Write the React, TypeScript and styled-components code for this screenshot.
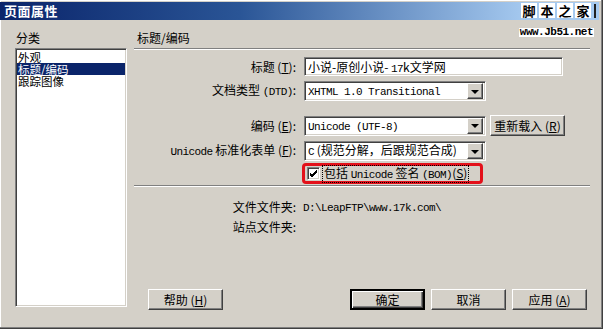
import React from 'react';
import styled, { createGlobalStyle } from 'styled-components';

const cjk = `"Noto Sans CJK SC", "Liberation Sans", sans-serif`;
const mono = `"Liberation Mono", "Noto Sans CJK SC", monospace`;

const GlobalStyle = createGlobalStyle`
  html, body { margin: 0; padding: 0; background: #d4d0c8; }
  body { font-family: ${cjk}; font-size: 12px; color: #000; }
`;

const Window = styled.div`
  position: relative;
  width: 603px;
  height: 329px;
  box-sizing: border-box;
  background: #d4d0c8;
  border-right: 1px solid #404040;
  border-bottom: 1px solid #404040;
  box-shadow: inset -1px -1px #808080, inset 1px 1px #ffffff;
  display: flex;
  flex-direction: column;
  overflow: hidden;
`;

const TitleBar = styled.div`
  margin: 2px 3px 0 0;
  height: 18px;
  background: linear-gradient(to right, #0a246a 0%, #2a5596 40%, #a6caf0 88%);
  display: flex;
  align-items: center;
  padding-left: 4px;
`;

const TitleText = styled.span`
  color: #fff;
  font-weight: bold;
  font-size: 13px;
  letter-spacing: 0.5px;
  line-height: 18px;
`;

const Watermark = styled.div`
  position: absolute;
  top: 3px;
  right: 6px;
  display: flex;
  flex-direction: column;
  align-items: flex-end;
  gap: 10px;
`;

const MarkChars = styled.div`
  display: flex;
  gap: 2px;
  align-items: center;
`;

const MarkChar = styled.span`
  background: #fff;
  color: #000;
  width: 16px;
  height: 15px;
  line-height: 15px;
  text-align: center;
  font-size: 13px;
  font-weight: bold;
`;

const MarkBar = styled.span`
  width: 2px;
  height: 14px;
  background: #202020;
  margin-left: 1px;
`;

const MarkUrl = styled.span`
  background: #fff;
  font-family: ${mono};
  font-size: 11px;
  letter-spacing: -0.5px;
  font-weight: bold;
  line-height: 9px;
  padding: 0 1px;
  margin-right: 2px;
`;

const Body = styled.div`
  flex: 1;
  display: flex;
  padding: 0 0 18px 15px;
`;

const LeftCol = styled.div`
  width: 112px;
  display: flex;
  flex-direction: column;
`;

const GroupLabel = styled.div<{ $indent?: number }>`
  margin-top: 11px;
  height: 14px;
  line-height: 14px;
  padding-left: ${p => p.$indent ?? 1}px;
`;

const sunken = `
  box-sizing: border-box;
  border: 1px solid;
  border-color: #808080 #ffffff #ffffff #808080;
  box-shadow: inset 1px 1px #404040, inset -1px -1px #d4d0c8;
  background: #fff;
`;

const raised = `
  box-sizing: border-box;
  border: 1px solid;
  border-color: #ffffff #404040 #404040 #ffffff;
  box-shadow: inset -1px -1px #808080, inset 1px 1px #d4d0c8;
  background: #d4d0c8;
`;

const ListBox = styled.div`
  ${sunken}
  margin-top: 3px;
  height: 259px;
  padding: 2px 1px;
`;

const ListItem = styled.div<{ $selected?: boolean }>`
  height: 12px;
  line-height: 12px;
  font-size: 11.5px;
  padding-left: 1px;
  white-space: nowrap;
  background: ${p => (p.$selected ? '#0a246a' : 'transparent')};
  color: ${p => (p.$selected ? '#fff' : '#000')};
`;

const RightCol = styled.div`
  width: 456px;
  margin-left: 7px;
  display: flex;
  flex-direction: column;
`;

const Etched = styled.div<{ $top: number }>`
  margin-top: ${p => p.$top}px;
  height: 0;
  border-top: 1px solid #808080;
  border-bottom: 1px solid #ffffff;
`;

const Row = styled.div<{ $top: number }>`
  margin-top: ${p => p.$top}px;
  display: flex;
  align-items: center;
`;

const Label = styled.span`
  width: 166px;
  padding-right: 4px;
  box-sizing: border-box;
  text-align: right;
  white-space: nowrap;
  line-height: 14px;
  margin-right: 4px;
`;

const Lat = styled.span`
  font-family: ${mono};
  font-size: 11px;
  letter-spacing: -0.6px;
`;

const TextInput = styled.div`
  ${sunken}
  width: 259px;
  height: 19px;
  padding-left: 3px;
  line-height: 17px;
  white-space: nowrap;
`;

const Select = styled.div`
  ${sunken}
  width: 182px;
  height: 20px;
  display: flex;
  align-items: center;
  padding: 2px 2px 2px 3px;
`;

const SelectText = styled.span`
  flex: 1;
  white-space: nowrap;
  overflow: hidden;
  line-height: 16px;
`;

const DropButton = styled.span`
  ${raised}
  width: 16px;
  height: 16px;
  display: flex;
  align-items: center;
  justify-content: center;
  &::after {
    content: '';
    border-left: 4px solid transparent;
    border-right: 4px solid transparent;
    border-top: 4px solid #000;
    margin-top: 1px;
  }
`;

const PushButton = styled.button<{ $default?: boolean; $width?: number }>`
  ${raised}
  width: ${p => p.$width ?? 75}px;
  height: 21px;
  padding: 0;
  font-family: ${cjk};
  font-size: 12px;
  color: #000;
  white-space: nowrap;
  ${p =>
    p.$default &&
    `
    border: 2px solid;
    border-color: #000;
    box-shadow: inset 1px 1px #fff, inset -1px -1px #404040, inset -2px -2px #808080;
  `}
`;

const HighlightBox = styled.div`
  margin-left: -2px;
  width: 181px;
  height: 21px;
  box-sizing: border-box;
  border: 3px solid #e3101a;
  border-radius: 4px;
  display: flex;
  align-items: center;
  padding-left: 2px;
`;

const CheckBox = styled.span`
  ${sunken}
  width: 13px;
  height: 13px;
  display: flex;
  align-items: center;
  justify-content: center;
`;

const CheckLabel = styled.span`
  margin-left: 3px;
  padding: 0 1px;
  outline: 1px dotted #000;
  line-height: 13px;
  white-space: nowrap;
`;

const Value = styled.span`
  line-height: 14px;
  white-space: nowrap;
  margin-left: -1px;
`;

const ButtonRow = styled.div`
  margin-top: auto;
  display: flex;
  padding: 0 3px 0 14px;
  gap: 6px;
`;

const Spacer = styled.div`
  flex: 1;
`;

const Key = ({ k }: { k: string }) => (
  <span>
    (<u>{k}</u>)
  </span>
);

export default function App() {
  return (
    <>
      <GlobalStyle />
      <Window>
        <TitleBar>
          <TitleText>页面属性</TitleText>
        </TitleBar>
        <Watermark>
          <MarkChars>
            <MarkChar>脚</MarkChar>
            <MarkChar>本</MarkChar>
            <MarkChar>之</MarkChar>
            <MarkChar>家</MarkChar>
            <MarkBar />
          </MarkChars>
          <MarkUrl>www.Jb51.net</MarkUrl>
        </Watermark>
        <Body>
          <LeftCol>
            <GroupLabel>分类</GroupLabel>
            <ListBox>
              <ListItem>外观</ListItem>
              <ListItem $selected>标题/编码</ListItem>
              <ListItem>跟踪图像</ListItem>
            </ListBox>
          </LeftCol>
          <RightCol>
            <GroupLabel $indent={3}>标题/编码</GroupLabel>
            <Etched $top={3} />

            <Row $top={7}>
              <Label>
                标题 <Key k="T" />:
              </Label>
              <TextInput>
                小说-原创小说- <Lat>17</Lat>k文学网
              </TextInput>
            </Row>

            <Row $top={5}>
              <Label>
                文档类型 <Lat>(DTD)</Lat>:
              </Label>
              <Select>
                <SelectText>
                  <Lat>XHTML 1.0 Transitional</Lat>
                </SelectText>
                <DropButton />
              </Select>
            </Row>

            <Row $top={14}>
              <Label>
                编码 <Key k="E" />:
              </Label>
              <Select>
                <SelectText>
                  <Lat>Unicode (UTF-8)</Lat>
                </SelectText>
                <DropButton />
              </Select>
              <PushButton style={{ marginLeft: 4 }}>
                重新载入 <Key k="R" />
              </PushButton>
            </Row>

            <Row $top={5}>
              <Label>
                <Lat>Unicode</Lat> 标准化表单 <Key k="F" />:
              </Label>
              <Select>
                <SelectText>
                  <Lat>C</Lat> (规范分解，后跟规范合成)
                </SelectText>
                <DropButton />
              </Select>
            </Row>

            <Row $top={2}>
              <Label />
              <HighlightBox>
                <CheckBox>
                  <svg width="9" height="9" viewBox="0 0 9 9">
                    <path d="M1 4 L3 6 L8 1 M1 5 L3 7 L8 2 M1 6 L3 8 L8 3" stroke="#000" strokeWidth="1" fill="none" />
                  </svg>
                </CheckBox>
                <CheckLabel>
                  包括 <Lat>Unicode</Lat> 签名 <Lat>(BOM)</Lat>
                  <Key k="S" />
                </CheckLabel>
              </HighlightBox>
            </Row>

            <Etched $top={1} />

            <Row $top={12}>
              <Label>文件文件夹:</Label>
              <Value>
                <Lat>D:\LeapFTP\www.17k.com\</Lat>
              </Value>
            </Row>
            <Row $top={5}>
              <Label>站点文件夹:</Label>
            </Row>

            <ButtonRow>
              <PushButton>
                帮助 <Key k="H" />
              </PushButton>
              <Spacer />
              <PushButton $default>确定</PushButton>
              <PushButton>取消</PushButton>
              <PushButton>
                应用 <Key k="A" />
              </PushButton>
            </ButtonRow>
          </RightCol>
        </Body>
      </Window>
    </>
  );
}
